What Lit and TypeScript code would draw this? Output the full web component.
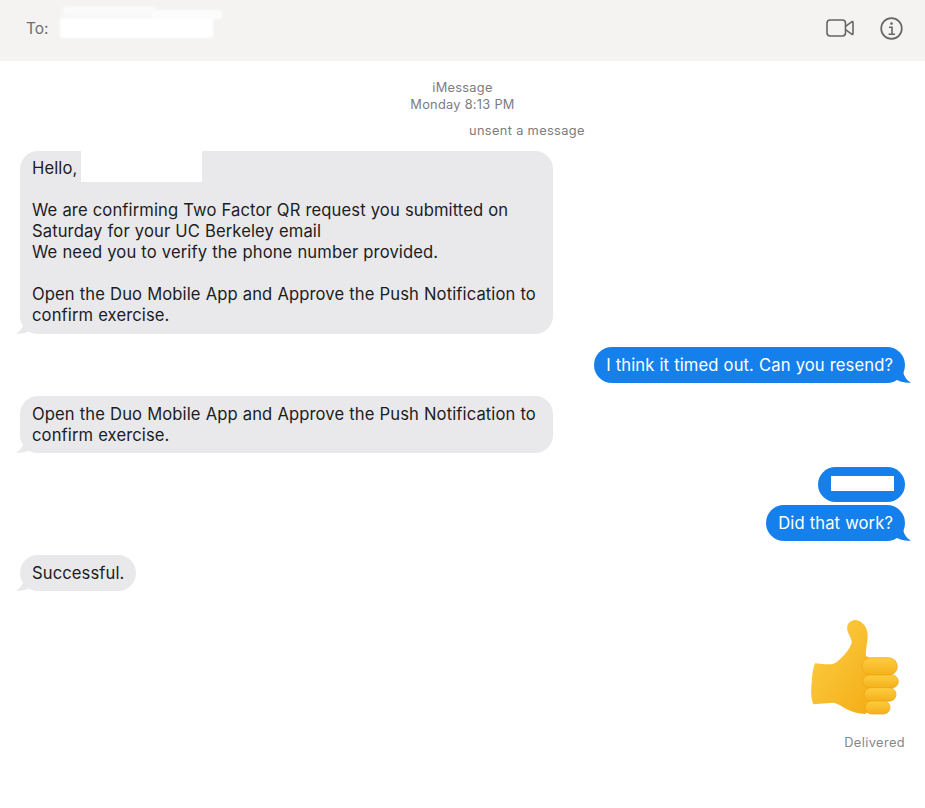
import { LitElement, html, css, svg } from "lit";
import { customElement } from "lit/decorators.js";

const tailLeft = svg`<svg class="tail tl" width="14" height="14" viewBox="0 0 14 14"><path d="M8 0 C8 6 5 11 0 13.4 C4 14 9 13.6 14 11 L14 0 Z" fill="#e9e9eb"/></svg>`;
const tailRight = svg`<svg class="tail tr" width="14" height="14" viewBox="0 0 14 14"><path d="M6 0 C6 6 9 11 14 13.4 C10 14 5 13.6 0 11 L0 0 Z" fill="#1580ec"/></svg>`;

@customElement("app-root")
export class AppRoot extends LitElement {
  static styles = css`
    :host {
      display: block;
      width: 925px;
      height: 808px;
      background: #fff;
      overflow: hidden;
      font-family: Inter, "Liberation Sans", sans-serif;
      color: #1d1d1f;
    }
    .header {
      height: 61px;
      background: #f4f3f2;
      display: flex;
      align-items: center;
      padding: 0 22px 0 26px;
      box-sizing: border-box;
      gap: 12px;
    }
    .to { font-size: 15.5px; color: #6e6e6e; margin-top: -4px; }
    .to-mask {
      width: 153px; height: 20px; background: #fff; margin: -5px 0 0 -1px;
      position: relative; filter: blur(1.5px);
    }
    .to-mask::before {
      content: ""; position: absolute; left: 3px; top: -12px; width: 92px; height: 10px; background: #fafafa;
    }
    .to-mask::after {
      content: ""; position: absolute; left: 93px; top: -8px; width: 69px; height: 9px; background: #fcfcfc;
    }
    .spacer { flex: 1; }
    .icons { display: flex; align-items: center; gap: 26px; margin-top: -5px; }
    .icons svg { display: block; }
    .meta {
      text-align: center;
      font-size: 12.8px;
      line-height: 17px;
      color: #7c7c80;
      padding-top: 18px;
      letter-spacing: 0.28px;
    }
    .unsent {
      font-size: 12.8px;
      line-height: 17px;
      color: #7c7c80;
      margin: 9px 0 0 469px;
      letter-spacing: 0.35px;
    }
    .thread { display: flex; flex-direction: column; padding: 0 20px; }
    .bubble {
      position: relative;
      font-size: 16.6px;
      letter-spacing: 0.1px;
      word-spacing: 0.3px;
      line-height: 21px;
      padding: 7px 12px 8px;
      border-radius: 18px;
      box-sizing: border-box;
    }
    .in { background: #e9e9eb; align-self: flex-start; color: #1d1d1f; }
    .wide { width: 533px; }
    .out { background: #1580ec; color: #fff; align-self: flex-end; }
    .tail { position: absolute; bottom: 0; display: block; }
    .tl { left: -4px; }
    .tr { right: -6px; }
    .first { margin-top: 12px; }
    .mask {
      display: inline-block; width: 121px; height: 32px; background: #fff;
      vertical-align: middle; margin: -9px 0 -3px -1px; filter: blur(0.6px);
    }
    .r1, .r2, .r4, .r5 { padding-top: 8px; padding-bottom: 7px; }
    .r1 { margin-top: 13px; }
    .r2 { margin-top: 13px; }
    .r3 { margin-top: 14px; height: 35px; width: 87px; padding: 0; display: flex; align-items: center; justify-content: center; }
    .mask2 { width: 63px; height: 15px; background: #fff; display: block; margin: -2px 0 0 2px; }
    .r4 { margin-top: 3px; }
    .r5 { margin-top: 14px; }
    .thumb { align-self: flex-end; margin: 26px 5px 0 0; display: block; }
    .delivered {
      align-self: flex-end; font-size: 12.8px; line-height: 17px; color: #85858a;
      margin-top: 19px; letter-spacing: 0.4px;
    }
  `;

  render() {
    return html`
      <div class="header">
        <span class="to">To:</span>
        <span class="to-mask"></span>
        <span class="spacer"></span>
        <div class="icons">
          <svg width="28" height="18" viewBox="0 0 28 18" fill="none" stroke="#666" stroke-width="1.6" stroke-linejoin="round">
            <rect x="1" y="1" width="18.5" height="16" rx="3.2"/>
            <path d="M19.5 7.4 L26 2.6 Q27 2.2 27 3.4 V14.6 Q27 15.8 26 15.4 L19.5 10.6"/>
          </svg>
          <svg width="23" height="23" viewBox="0 0 23 23" fill="none" stroke="#666">
            <circle cx="11.5" cy="11.5" r="10.3" stroke-width="1.7"/>
            <circle cx="11.5" cy="6.6" r="1.3" fill="#666" stroke="none"/>
            <path d="M9 10.3 H12 V17 M8.6 17.2 H15" stroke-width="1.6"/>
          </svg>
        </div>
      </div>
      <div class="meta">iMessage<br />Monday 8:13 PM</div>
      <div class="unsent">unsent a message</div>
      <div class="thread">
        <div class="bubble in wide first">
          Hello, <span class="mask"></span><br /><br />
          We are confirming Two Factor QR request you submitted on<br />
          Saturday for your UC Berkeley email<br />
          We need you to verify the phone number provided.<br /><br />
          Open the Duo Mobile App and Approve the Push Notification to<br />
          confirm exercise.${tailLeft}
        </div>
        <div class="bubble out r1">I think it timed out. Can you resend?${tailRight}</div>
        <div class="bubble in wide r2">
          Open the Duo Mobile App and Approve the Push Notification to<br />
          confirm exercise.${tailLeft}
        </div>
        <div class="bubble out r3"><span class="mask2"></span></div>
        <div class="bubble out r4">Did that work?${tailRight}</div>
        <div class="bubble in r5">Successful.${tailLeft}</div>
        <svg class="thumb" width="92" height="98" viewBox="0 0 92 98">
          <defs>
            <linearGradient id="h" x1="0" y1="0" x2="1" y2="1">
              <stop offset="0" stop-color="#fdd045"/>
              <stop offset="1" stop-color="#f3ab14"/>
            </linearGradient>
            <linearGradient id="f" x1="0" y1="0" x2="0" y2="1">
              <stop offset="0" stop-color="#fdcd3e"/>
              <stop offset="1" stop-color="#f5b01c"/>
            </linearGradient>
          </defs>
          <path d="M39.3 9 C41 3 48 1 53 5 C59 9 60.5 16 59.3 24 C58.5 30 57.5 35 58 39 L62 41 L70 60 L66 90 L57 97 C50 96.5 44 95 38.7 92.3 C34 89.5 30 86.5 25.3 85.7 L5.3 87.3 C2.5 80 3 72 3.7 65.7 C4 58 5 52 7 46.3 C12 46.8 18 47.5 23.7 47.3 C27 46.5 30 44.5 32 42.3 C37 37 42 32 43.7 25.7 C44 20 38 16 39.3 9 Z" fill="url(#h)"/>
          <rect x="53.7" y="40.7" width="35.6" height="17.6" rx="8.8" fill="url(#f)" stroke="#eda313" stroke-width=".7"/>
          <rect x="54.7" y="58" width="35.6" height="13" rx="6.5" fill="url(#f)" stroke="#eda313" stroke-width=".7"/>
          <rect x="56" y="70.7" width="32" height="13.5" rx="6.7" fill="url(#f)" stroke="#eda313" stroke-width=".7"/>
          <rect x="57" y="84" width="25" height="13" rx="6.5" fill="url(#f)" stroke="#eda313" stroke-width=".7"/>
        </svg>
        <div class="delivered">Delivered</div>
      </div>
    `;
  }
}
